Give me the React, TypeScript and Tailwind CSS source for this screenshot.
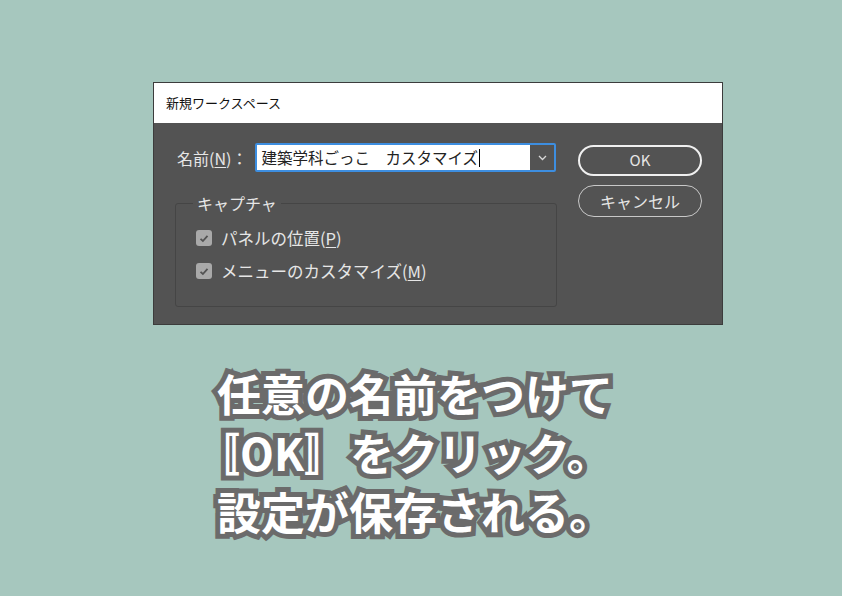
const jp = "font-['Noto_Sans_CJK_JP','Noto_Sans',sans-serif]";

function Check() {
  return (
    <span className="flex h-[16px] w-[16px] items-center justify-center rounded-[3px] bg-[#a9a9a9]">
      <svg width="10" height="9" viewBox="0 0 10 9">
        <path d="M1.5 4.8 L3.9 7 L8.5 1.8" fill="none" stroke="#535353" strokeWidth="1.8" />
      </svg>
    </span>
  );
}

function Dialog() {
  return (
    <div className={`ml-[153px] mt-[82px] w-[570px] border border-[#3c3c3c] ${jp}`}>
      <div className="flex h-[40px] items-center bg-white pl-[12px] text-[13px] text-[#111]">
        新規ワークスペース
      </div>
      <div className="flex h-[201px] bg-[#535353] pl-[21px] pr-[20px] pt-[20px]">
        <div className="w-[382px]">
          <div className="flex items-center">
            <span className="ml-[2px] text-[16px] text-[#e6e6e6]">
              名前(<span className="underline underline-offset-2">N</span>)：
            </span>
            <div className="ml-[8px] flex h-[29px] w-[301px] rounded-[2px] border-2 border-[#3d8ee0]">
              <div className="flex flex-1 items-center bg-white pl-[4px] text-[15.5px] text-[#222]">
                建築学科ごっこ　カスタマイズ
                <span className="ml-[1px] h-[18px] w-px bg-black" />
              </div>
              <div className="flex w-[24px] items-center justify-center bg-[#535353]">
                <svg width="9" height="6" viewBox="0 0 9 6">
                  <path d="M1 1 L4.5 4.5 L8 1" fill="none" stroke="#d8d8d8" strokeWidth="1.3" />
                </svg>
              </div>
            </div>
          </div>
          <fieldset className="mt-[23px] h-[112px] rounded-[3px] border border-[#454545] pl-[20px]">
            <legend className="-ml-[3px] px-[4px] text-[16px] leading-[16px] text-[#e6e6e6]">キャプチャ</legend>
            <div className="mt-[15px] flex items-center gap-[9px] text-[16.5px] text-[#e6e6e6]">
              <Check />
              <span>
                パネルの位置(<span className="underline underline-offset-2">P</span>)
              </span>
            </div>
            <div className="mt-[8px] flex items-center gap-[9px] text-[16.5px] text-[#e6e6e6]">
              <Check />
              <span>
                メニューのカスタマイズ(<span className="underline underline-offset-2">M</span>)
              </span>
            </div>
          </fieldset>
        </div>
        <div className="ml-[21px] flex flex-col">
          <button className="mt-[2px] h-[31px] w-[124px] rounded-full border-2 border-[#f0f0f0] text-[15px] text-[#e6e6e6]">
            OK
          </button>
          <button className="mt-[9px] h-[32px] w-[124px] rounded-full border border-[#c8c8c8] text-[16px] text-[#e6e6e6]">
            キャンセル
          </button>
        </div>
      </div>
    </div>
  );
}

export default function App() {
  return (
    <div className="h-[596px] w-[842px] overflow-hidden bg-[#a6c7be]">
      <Dialog />
      <div
        className={`ml-[217px] mt-[39px] text-[44px] font-bold leading-[59px] text-white [paint-order:stroke_fill] [-webkit-text-stroke:10px_#6b6b6b] ${jp}`}
      >
        <p>任意の名前をつけて</p>
        <p className="-ml-[21px]">
          〚OK〛<span className="ml-[2px]">をクリック。</span>
        </p>
        <p>設定が保存される。</p>
      </div>
    </div>
  );
}
